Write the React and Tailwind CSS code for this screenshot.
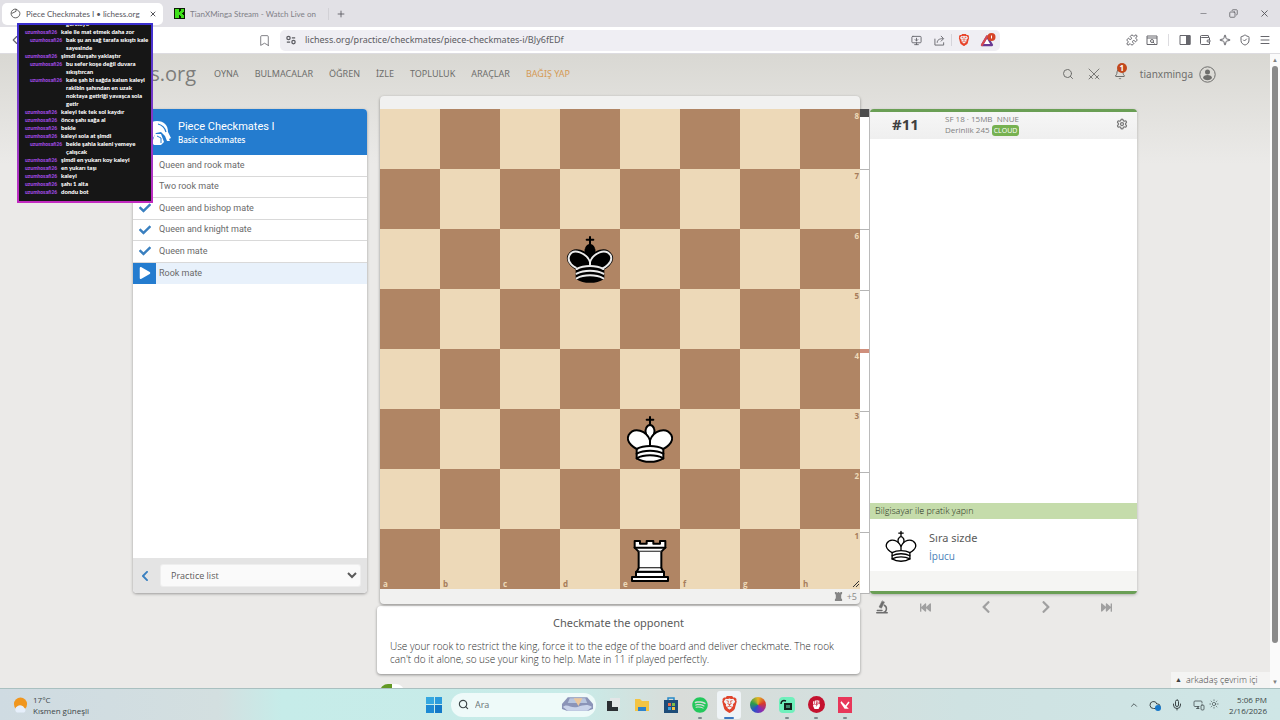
import React from "react";
import {
  Bookmark, Plus, X, Minus, Copy, Search, Bell, Settings, MonitorDown, Share, Puzzle,
  Wallet, Sparkle, ShieldCheck, Menu, ChevronLeft, ChevronUp, Mic, Cloud,
  CircleUserRound, MonitorSmartphone, Sun,
} from "lucide-react";
import {
  FaCheck, FaPlay, FaChevronLeft, FaChevronRight, FaFastBackward, FaFastForward,
  FaSpotify, FaFistRaised,
} from "react-icons/fa";
import { SiBrave } from "react-icons/si";

const user = "uzumhosafi26";
const chat = [
  { text: "kale ile mat etmek daha zor" },
  { text: "bak şu an sağ tarafa sıkıştı kale\nsayesinde", indent: true },
  { text: "şimdi durşahı yaklaştır" },
  { text: "bu sefer koşe değil duvara\nsıkıştırcan", indent: true },
  { text: "kale şah bi sağda kalsın kaleyi\nrakibin şahından en uzak\nnoktaya getiriği yavaşca sola\ngetir", indent: true },
  { text: "kaleyi tek tek sol kaydır" },
  { text: "önce şahı sağa al" },
  { text: "bekle" },
  { text: "kaleyi sola at şimdi" },
  { text: "bekle şahla kaleni yemeye\nçalışcak", indent: true },
  { text: "şimdi en yukarı koy kaleyi" },
  { text: "en yukarı taşı" },
  { text: "kaleyi" },
  { text: "şahı 1 alta" },
  { text: "dondu bot" },
];

const lessons = ["Queen and rook mate", "Two rook mate", "Queen and bishop mate", "Queen and knight mate", "Queen mate", "Rook mate"];
const files = ["a", "b", "c", "d", "e", "f", "g", "h"];
const ranks = [8, 7, 6, 5, 4, 3, 2, 1];
const pieces = { d6: "bk", e3: "wk", e1: "wr" };

function King({ black = false, className }) {
  const fill = black ? "#000" : "#fff";
  return (
    <svg viewBox="0 0 45 45" className={className} fill="none" stroke="#000" strokeWidth="1.5" strokeLinecap="round" strokeLinejoin="round">
      <path d="M22.5 11.63V6M20 8h5" strokeLinejoin="miter" />
      <path fill={fill} strokeLinecap="butt" d="M22.5 25s4.5-7.5 3-10.5c0 0-1-2.5-3-2.5s-3 2.5-3 2.5c-1.5 3 3 10.5 3 10.5" />
      <path fill={fill} d="M12.5 37c5.5 3.5 14.5 3.5 20 0v-7s9-4.5 6-10.5c-4-6.5-13.5-3.5-16 4V27v-3.5c-2.5-7.5-12-10.5-16-4-3 6 6 10.5 6 10.5v7" />
      {black && <path stroke="#ececec" d="M32 29.5s8.5-4 6-9.7C34.1 14 25 18 22.5 24.6v2.1-2.1C20 18 9.9 14 7 19.9c-2.5 5.6 4.8 9 4.8 9" />}
      <path stroke={black ? "#ececec" : "#000"} d="M12.5 30c5.5-3 14.5-3 20 0m-20 3.5c5.5-3 14.5-3 20 0m-20 3.5c5.5-3 14.5-3 20 0" />
    </svg>
  );
}

function Rook({ className }) {
  return (
    <svg viewBox="0 0 45 45" className={className} fill="#fff" stroke="#000" strokeWidth="1.5" strokeLinecap="round" strokeLinejoin="round">
      <path strokeLinecap="butt" d="M9 39h27v-3H9zm3-3v-4h21v4zm-1-22V9h4v2h5V9h5v2h5V9h4v5" />
      <path d="m34 14-3 3H14l-3-3" />
      <path strokeLinecap="butt" strokeLinejoin="miter" d="M31 17v12.5H14V17" />
      <path d="m31 29.5 1.5 2.5h-20l1.5-2.5" />
      <path fill="none" strokeLinejoin="miter" d="M11 14h23" />
    </svg>
  );
}

function IconButton({ label, children, className = "" }) {
  return (
    <button type="button" aria-label={label} className={`flex shrink-0 items-center justify-center ${className}`}>
      {children}
    </button>
  );
}

function TabStrip() {
  return (
    <div className="flex h-[27px] shrink-0 items-center bg-[#e2e1e6] font-['Lato',sans-serif] text-[8px] text-[#55555b]">
      <div className="ml-[2px] flex h-[22px] w-[161px] items-center rounded-[5px] bg-white pl-2 pr-[6px]">
        <svg viewBox="0 0 20 20" className="mr-[5px] size-[11px]" fill="none" stroke="#444" strokeWidth="1.5">
          <path d="M11 2a8 8 0 1 0 7 8c0-4-3-5-7-8Zm0 0 0 4-8 4" />
        </svg>
        <span className="flex-1 whitespace-nowrap">Piece Checkmates I • lichess.org</span>
        <IconButton label="Close tab"><X size={8} strokeWidth={3} /></IconButton>
      </div>
      <div className="flex w-[166px] items-center border-r border-[#d2d1d6] pl-[11px]">
        <svg viewBox="0 0 11 11" className="mr-[5px] size-[11px] shrink-0">
          <path fill="#0b1c05" d="M0 0h11v11H0z" />
          <path fill="#3fe01a" d="M1 1h4v3h1V3h1V1h3v3H9v1H8v1h1v1h1v3H7V8H6V7H5v3H1z" />
        </svg>
        <span className="whitespace-nowrap text-[#808086]">TianXMinga Stream - Watch Live on</span>
      </div>
      <IconButton label="New tab" className="ml-[7px]"><Plus size={10} /></IconButton>
      <div className="ml-auto flex items-center gap-[21px] pr-[10px]">
        <IconButton label="Minimize"><Minus size={9} strokeWidth={1.5} /></IconButton>
        <IconButton label="Restore"><Copy size={9} className="-scale-x-100" /></IconButton>
        <IconButton label="Close window"><X size={11} /></IconButton>
      </div>
    </div>
  );
}

function Toolbar() {
  return (
    <div className="flex h-[27px] shrink-0 items-center border-b border-[#dddce0] bg-white text-[#66666c]">
      <IconButton label="Back" className="ml-2"><ChevronLeft size={14} /></IconButton>
      <IconButton label="Bookmark" className="ml-[236px]"><Bookmark size={13} strokeWidth={1.5} /></IconButton>
      <div className="ml-[9px] flex h-[21px] w-[720px] items-center rounded-[5px] bg-[#efeef3] pr-1 pl-[6px]">
        <svg viewBox="0 0 12 12" className="size-[10px]" fill="none" stroke="#5c5c62" strokeWidth="1.5">
          <circle cx="3" cy="3.5" r="2" /><path d="M7 3.5h4M1 8.5h4" /><circle cx="9" cy="8.5" r="2" />
        </svg>
        <input
          aria-label="Address"
          readOnly
          value="lichess.org/practice/checkmates/piece-checkmates-i/BJy6fEDf"
          className="ml-[9px] min-w-0 flex-1 bg-transparent font-['Noto_Sans',sans-serif] text-[9px] text-[#5c5c62] outline-none"
        />
        <div className="flex items-center gap-3">
          <IconButton label="Install app"><MonitorDown size={11} /></IconButton>
          <IconButton label="Share">
            <svg viewBox="0 0 24 24" className="size-[11px]" fill="none" stroke="currentColor" strokeWidth="2"><path d="M2 8v14h19v-6" /><path d="M7 17c0-6 4-9 13-9M15 2l6 6-6 6" /></svg>
          </IconButton>
        </div>
        <span className="mx-[6px] h-3 w-px bg-[#d5d4da]" />
        <div className="flex items-center gap-[10px]">
          <IconButton label="Shields"><SiBrave size={12} color="#e8442a" /></IconButton>
          <button type="button" aria-label="Rewards">
            <svg viewBox="0 0 32 28" className="h-[14px] w-4">
              <path d="M14 7 4 24h20z" fill="#fff" stroke="#693a93" strokeWidth="4.5" strokeLinejoin="round" />
              <path d="M14 7 4 24" stroke="#d94a50" strokeWidth="4.5" strokeLinecap="round" />
              <circle cx="23" cy="8" r="8" fill="#d64528" />
              <path d="M23 5v6" stroke="#fff" strokeWidth="2" />
            </svg>
          </button>
        </div>
      </div>
      <div className="ml-auto flex items-center gap-2 pr-[9px]">
        <IconButton label="Extensions"><Puzzle size={12} /></IconButton>
        <IconButton label="Search tabs">
          <svg viewBox="0 0 24 24" className="size-3" fill="none" stroke="currentColor" strokeWidth="2"><path d="M2 4h20v17H2zM2 8h20" /><circle cx="12" cy="14" r="3" /><path d="m14 16 3 3" /></svg>
        </IconButton>
        <span className="mx-[2px] h-3 w-px bg-[#dddce0]" />
        <IconButton label="Sidebar">
          <svg viewBox="0 0 24 24" className="size-3" fill="none" stroke="currentColor" strokeWidth="2"><path d="M2 3h20v18H2z" /><path d="M15 3h7v18h-7z" fill="currentColor" /></svg>
        </IconButton>
        <IconButton label="Wallet"><Wallet size={12} /></IconButton>
        <IconButton label="Assistant"><Sparkle size={12} /></IconButton>
        <IconButton label="VPN"><ShieldCheck size={12} /></IconButton>
        <IconButton label="Menu"><Menu size={12} /></IconButton>
      </div>
    </div>
  );
}

function SiteHeader() {
  const links = ["OYNA", "BULMACALAR", "ÖĞREN", "İZLE", "TOPLULUK", "ARAÇLAR"];
  return (
    <header className="flex h-10 items-center pr-[54px] pl-[77px] text-[#6e6e6c]">
      <a href="#home" className="w-[119px] text-right text-[20px] leading-6 text-[#7d7d7b]">lichess.org</a>
      <nav className="ml-[18px] flex gap-4 font-['Noto_Sans',sans-serif] text-[9px]">
        {links.map((l) => <a key={l} href={`#${l}`}>{l}</a>)}
        <a href="#donate" className="text-[#d59a55]">BAĞIŞ YAP</a>
      </nav>
      <div className="ml-auto flex items-center gap-[14px]">
        <IconButton label="Search"><Search size={12} /></IconButton>
        <IconButton label="Challenges">
          <svg viewBox="0 0 24 24" className="size-3" fill="none" stroke="currentColor" strokeWidth="1.8" strokeLinecap="round">
            <path d="M2 2 20 20M22 2 4 20M15 21l6-6M9 21l-6-6M20 20l2 2M4 20l-2 2" />
          </svg>
        </IconButton>
        <button type="button" aria-label="Notifications" className="relative">
          <Bell size={12} />
          <span className="absolute -top-[5px] left-[3px] flex size-[10px] items-center justify-center rounded-full bg-[#c2481c] text-[8px] font-bold text-white">1</span>
        </button>
        <a href="#profile" className="flex items-center gap-[6px] font-['Noto_Sans',sans-serif] text-[10px]">
          tianxminga
          <svg viewBox="0 0 17 17" className="size-[17px]">
            <circle cx="8.5" cy="8.5" r="7.7" fill="none" stroke="currentColor" />
            <circle cx="8.5" cy="6" r="2.5" fill="currentColor" />
            <path d="M4 12c0-4 9-4 9 0-2 3-7 3-9 0z" fill="currentColor" />
          </svg>
        </a>
      </div>
    </header>
  );
}

function LessonPanel() {
  return (
    <aside className="mt-[13px] flex h-[484px] w-[234px] shrink-0 flex-col overflow-hidden rounded-[4px] bg-white shadow-[0_1px_3px_rgba(0,0,0,0.35)]">
      <div className="flex h-[46px] items-center bg-[#247ccf] pl-[10px] text-white">
        <svg viewBox="0 0 28 28" className="size-7">
          <path fill="#fff" d="M3 18C2 9 7 3 14 3s11 4 11 11l3 6-2 1 1 2h-3l-2-5-4-4-5 1-3 5v8H6z" />
          <path fill="none" stroke="#247ccf" strokeWidth="1.2" d="M15 6c4 1 7 4 8 8" />
          <path fill="#fff" d="M12 16h6l3 8-3 3h-7l-2-2z" />
          <path fill="none" stroke="#247ccf" strokeWidth="1" d="M14 18l4 2v5" />
        </svg>
        <div className="ml-[7px]">
          <h1 className="font-[family-name:Roboto,sans-serif] text-[11px] leading-[15px]">Piece Checkmates I</h1>
          <p className="font-['Noto_Sans',sans-serif] text-[8px] leading-3 font-medium">Basic checkmates</p>
        </div>
      </div>
      <nav className="grid h-[129px] grid-rows-6 font-[family-name:Roboto,sans-serif] text-[9px] text-[#6a6a6a]">
        {lessons.map((name, i) => {
          const active = i === lessons.length - 1;
          return (
            <a key={name} href={`#lesson-${i}`} className={active ? "flex items-center bg-[#e8f1fb]" : "flex items-center border-b border-[#d9d9d9]"}>
              <span className={active ? "flex h-full w-[23px] items-center justify-center bg-[#247ccf] text-white" : "flex h-full w-[23px] items-center justify-center text-[#3a80c0]"}>
                {active ? <FaPlay size={12} /> : <FaCheck size={12} />}
              </span>
              <span className="ml-[3px]">{name}</span>
            </a>
          );
        })}
      </nav>
      <div className="mt-auto flex h-[35px] items-center bg-[#e4e4e4] pr-[6px]">
        <IconButton label="Previous" className="mr-1 w-[23px] text-[#3a80c0]"><FaChevronLeft size={12} /></IconButton>
        <select aria-label="Practice list" className="h-[23px] flex-1 rounded-[3px] border border-[#eee] bg-[#fafafa] pl-[6px] text-[9px] text-[#5a5a5a]">
          <option>Practice list</option>
        </select>
      </div>
    </aside>
  );
}

function Board() {
  return (
    <div className="grid grid-cols-8">
      {ranks.map((rank, r) =>
        files.map((file, f) => {
          const dark = (r + f) % 2 === 1;
          const piece = pieces[file + rank];
          return (
            <div key={file + rank} className={dark ? "relative aspect-square bg-[#b08564] text-[#edd9b8]" : "relative aspect-square bg-[#edd9b8] text-[#a67c5b]"}>
              {piece === "bk" && <King black className="size-full" />}
              {piece === "wk" && <King className="size-full" />}
              {piece === "wr" && <Rook className="size-full" />}
              {file === "h" && <span className="absolute top-[1px] right-[1px] text-[8px] leading-3 font-bold">{rank}</span>}
              {rank === 1 && <span className="absolute bottom-0 left-[3px] text-[8px] leading-[11px] font-bold">{file}</span>}
            </div>
          );
        })
      )}
    </div>
  );
}

function BoardColumn() {
  return (
    <div className="w-[480px] shrink-0">
      <section aria-label="Board" className="relative rounded-[4px] bg-[#f1f1f0] pt-[13px] shadow-[0_1px_3px_rgba(0,0,0,0.4)]">
        <Board />
        <svg viewBox="0 0 8 8" className="absolute right-0 bottom-4 size-2" stroke="#333" strokeWidth="1"><path d="M1 7 7 1M4 7l3-3" /></svg>
        <div className="flex h-[15px] items-center justify-end gap-1 pr-[3px] text-[9px] text-[#8a8a8a]">
          <svg viewBox="0 0 10 10" className="size-[9px]" fill="#858585"><path d="M1 0h2v1h1V0h2v1h1V0h2v2L8 3v4l1 1v2H1V8l1-1V3L1 2z" /></svg>
          +5
        </div>
      </section>
      <section className="mt-[2px] -ml-[3px] h-[68px] rounded-[4px] bg-white px-[13px] pt-[9px] text-[#5a5a5a] shadow-[0_1px_3px_rgba(0,0,0,0.4)]">
        <h2 className="text-center font-['Noto_Sans',sans-serif] text-[11px] leading-4">Checkmate the opponent</h2>
        <p className="mt-[9px] text-[10px] leading-[13px] font-light text-[#2c2c2c]">
          Use your rook to restrict the king, force it to the edge of the board and deliver checkmate. The rook can't do it alone, so use your king to help. Mate in 11 if played perfectly.
        </p>
      </section>
      <div className="mt-[10px] h-4 w-6 rounded-full bg-linear-to-r from-[#629924] from-50% to-white to-50%" />
    </div>
  );
}

function Gauge() {
  return (
    <div className="relative mt-[13px] grid h-[485px] w-[10px] shrink-0 grid-rows-8 border-r border-[#bbb] bg-white">
      {ranks.map((r) => <span key={r} className="border-b border-[#b5b5b5]" />)}
      <span className="absolute inset-x-0 top-0 h-2 bg-[#4d4d4d]" />
      <span className="absolute inset-x-0 top-[240px] h-1 bg-[#cf8f7c]" />
    </div>
  );
}

function ToolsColumn() {
  return (
    <div className="mt-[13px] min-w-0 flex-1">
      <section aria-label="Analysis" className="flex h-[485px] flex-col rounded-[4px] border-y-[3px] border-[#6a9f55] bg-white shadow-[0_1px_3px_rgba(0,0,0,0.25)]">
        <div className="flex h-[27px] items-center bg-linear-to-b from-[#f6f6f6] to-[#efefef] pb-[3px]">
          <strong className="ml-[22px] w-[53px] text-[15px] text-[#404040]">#11</strong>
          <div className="text-[8px] leading-[11px] text-[#808080]">
            <div>SF 18 · 15MB&nbsp; NNUE</div>
            <div>Derinlik 245 <span className="rounded-[3px] bg-[#76b150] px-[2px] py-px text-[7px] text-white">CLOUD</span></div>
          </div>
          <IconButton label="Engine settings" className="mr-[9px] ml-auto text-[#777]"><Settings size={12} strokeWidth={2.5} /></IconButton>
        </div>
        <div className="mt-auto h-4 bg-[#c5dcab] pl-[5px] text-[9px] leading-4 font-light text-[#1e2a18]">Bilgisayar ile pratik yapın</div>
        <div className="flex h-[52px] items-center pt-[2px] pl-[11px]">
          <King className="size-10" />
          <div className="ml-2 pt-[2px]">
            <div className="font-['Noto_Sans',sans-serif] text-[11px] leading-[18px] text-[#5a5a5a]">Sıra sizde</div>
            <a href="#hint" className="block text-[10px] leading-[18px] text-[#4a80b8]">İpucu</a>
          </div>
        </div>
        <div className="h-5 bg-[#f5f5f3]" />
      </section>
      <div className="flex h-[26px] items-center text-[#a0a0a0]">
        <IconButton label="Analysis board" className="ml-[5px] w-[14px] text-[#6e6e6e]">
          <svg viewBox="0 0 24 24" className="size-[14px]" fill="none" stroke="currentColor" strokeWidth="2.5" strokeLinecap="round">
            <path d="M3 22h18M4 18h8M14 22a7 7 0 0 0 2-13" />
            <path d="m12 2-5 10 4 2 5-10z" fill="currentColor" strokeWidth="1" />
          </svg>
        </IconButton>
        <div className="ml-[6px] grid flex-1 grid-cols-4">
          <IconButton label="First move"><FaFastBackward size={11} /></IconButton>
          <IconButton label="Previous move"><FaChevronLeft size={14} /></IconButton>
          <IconButton label="Next move"><FaChevronRight size={14} /></IconButton>
          <IconButton label="Last move"><FaFastForward size={11} /></IconButton>
        </div>
      </div>
    </div>
  );
}

function ChatOverlay() {
  return (
    <section aria-label="Chat" className="absolute top-[23px] left-[17px] h-[180px] w-[136px] bg-linear-to-b from-[#3a2fd0] to-[#c22ac0] p-[2px]">
      <div className="flex h-full flex-col justify-end overflow-hidden bg-[#161616] px-[6px] pb-[5px] font-['Lato',sans-serif] text-[6px] leading-[8px] font-black text-white">
        <p className="pl-[41px]">gerekiyo</p>
        {chat.map((m) => (
          <p key={m.text} className={m.indent ? "flex gap-[2px] pl-[5px]" : "flex gap-[2px]"}>
            <span className="w-[34px] shrink-0 font-[family-name:Roboto,sans-serif] text-[5px] leading-[8px] font-bold text-[#a04ae0]">{user}</span>
            <span className="whitespace-pre">{m.text}</span>
          </p>
        ))}
      </div>
    </section>
  );
}

function TaskApp({ label, running = false, active = false, children }) {
  return (
    <button type="button" aria-label={label} className={active ? "relative flex h-7 w-6 items-center justify-center rounded-[3px] bg-[#eff4f7]" : "relative flex h-7 w-6 items-center justify-center"}>
      {children}
      {running && <span className="absolute bottom-0 left-[10px] h-[2px] w-1 rounded-full bg-[#7d8a8e]" />}
      {active && <span className="absolute bottom-0 left-[7px] h-[2px] w-[10px] rounded-full bg-[#3b78c0]" />}
    </button>
  );
}

function Taskbar() {
  return (
    <footer className="flex h-8 shrink-0 items-center border-t border-[#a9c0c0] bg-[linear-gradient(to_right,#cfdbe2,#d3dfe0_17%,#c6ece9_22%,#c8ebe8_45%,#d9dcd9_53%,#cfe2e2_75%,#cfe6e6)] text-[8px] leading-[11px] text-[#3c4648]">
      <div className="flex flex-1 items-center gap-[5px] pl-[13px]">
        <svg viewBox="0 0 16 18" className="h-[18px] w-[15px]">
          <circle cx="8" cy="8" r="7" fill="#f0961e" />
          <path d="M4 17a4 4 0 0 1 1-7 5 5 0 0 1 7 2 3 3 0 0 1 0 5z" fill="#e6effb" />
        </svg>
        <div><div>17°C</div><div>Kısmen güneşli</div></div>
      </div>
      <div className="flex items-center gap-[5px] pl-[3px]">
        <button type="button" aria-label="Start" className="grid size-4 grid-cols-2 gap-px">
          <span className="bg-[#35a8e0]" /><span className="bg-[#2b9bdc]" /><span className="bg-[#1d8ad4]" /><span className="bg-[#1279c8]" />
        </button>
        <label className="ml-1 flex h-6 w-[145px] items-center gap-[6px] rounded-full bg-[#eefaf9] pr-[2px] pl-[7px]">
          <Search size={11} strokeWidth={2.5} />
          <input aria-label="Search" placeholder="Ara" className="min-w-0 flex-1 bg-transparent text-[9px] outline-none placeholder:text-[#6a7476]" />
          <svg viewBox="0 0 34 18" className="h-[18px] w-[33px]">
            <path d="M7 1h20l6 7v5l-5 2H6l-5-2V8z" fill="#8b94b8" />
            <path d="M9 2h16l2 5H7z" fill="#b9c6df" />
            <path d="M13 2h9l-4 8z" fill="#ecc79c" />
            <path d="M2 11c5-4 8 2 15 0s10-3 15 0l-5 4H7z" fill="#c9d3ea" />
          </svg>
        </label>
        <TaskApp label="Task view">
          <svg viewBox="0 0 16 16" className="size-4"><path d="M5 1h10v10H5z" fill="#e3e6e7" /><path d="M2 4h5v6h6v4H2z" fill="#2c2f33" /></svg>
        </TaskApp>
        <TaskApp label="Files">
          <svg viewBox="0 0 16 16" className="size-4"><path d="M1 2h5l2 2h7v10H1z" fill="#f3c443" /><path d="M4 10h8v4H4z" fill="#2f83cc" /></svg>
        </TaskApp>
        <TaskApp label="Store">
          <svg viewBox="0 0 16 18" className="h-[18px] w-4"><path d="M5 5V2h6v3" fill="none" stroke="#2889c8" strokeWidth="1.5" /><path d="M1 4h14v13H1z" fill="#1e4c78" /><path d="M5 7h3v3H5z" fill="#ee6a4a" /><path d="M9 7h3v3H9z" fill="#7cbc4a" /><path d="M5 11h3v3H5z" fill="#38a5e4" /><path d="M9 11h3v3H9z" fill="#f4c342" /></svg>
        </TaskApp>
        <TaskApp label="Spotify" running><FaSpotify size={16} color="#24c85c" /></TaskApp>
        <TaskApp label="Brave" active><SiBrave size={17} color="#e0442c" /></TaskApp>
        <TaskApp label="Color tool">
          <span className="size-4 rounded-full bg-[conic-gradient(#e6b422,#d8392b,#8c2bb0,#2b50c8,#2a9d4a,#e6b422)]" />
        </TaskApp>
        <TaskApp label="Streaming" running>
          <svg viewBox="0 0 16 16" className="size-4"><rect width="16" height="16" rx="4" fill="#6ff0bc" /><path d="M5 6h8v7H5z" fill="#12211c" /><path d="M8 8v3m2-3v3" stroke="#6ff0bc" /><path d="M2 7c0-3 2-4 5-3" fill="none" stroke="#12211c" strokeWidth="1.5" /></svg>
        </TaskApp>
        <TaskApp label="Fist" running>
          <span className="flex size-[17px] items-center justify-center rounded-full bg-[#c4122f] text-white"><FaFistRaised size={9} /></span>
        </TaskApp>
        <TaskApp label="Valorant" running>
          <svg viewBox="0 0 14 16" className="h-4 w-[14px]"><path d="M0 0h14v16H0z" fill="#e8375a" /><path d="m3 5 4 6h2L3 5m8 0L8 9" stroke="#fff" strokeWidth="1.5" fill="none" /></svg>
        </TaskApp>
      </div>
      <div className="flex flex-1 items-center justify-end gap-[10px] pr-[13px]">
        <ChevronUp size={10} />
        <span className="relative"><Cloud size={12} /><span className="absolute right-0 bottom-0 size-[6px] rounded-full bg-[#1777c8]" /></span>
        <Mic size={12} />
        <span className="flex gap-1"><MonitorSmartphone size={12} strokeWidth={1.5} /><Sun size={10} strokeWidth={1.5} /></span>
        <div className="text-right"><div>5:06 PM</div><div>2/16/2026</div></div>
      </div>
    </footer>
  );
}

export default function App() {
  return (
    <div className="relative flex h-screen flex-col overflow-hidden font-['Open_Sans',sans-serif]">
      <TabStrip />
      <Toolbar />
      <div className="flex min-h-0 flex-1">
        <div className="relative min-w-0 flex-1 overflow-hidden bg-[#ebeae8] bg-[linear-gradient(to_bottom,#d9d8d3,#ebeae8_110px)]">
          <SiteHeader />
          <main className="mx-auto mt-[2px] flex max-w-[1004px] items-start">
            <LessonPanel />
            <div className="w-[13px] shrink-0" />
            <BoardColumn />
            <Gauge />
            <ToolsColumn />
          </main>
          <button type="button" className="absolute right-0 bottom-0 flex h-4 w-[99px] items-center gap-1 bg-[#f4f4f3] pl-[4px] text-[9px] font-light text-[#404040]">
            <span className="text-[7px]">▲</span>arkadaş çevrim içi
          </button>
        </div>
        <div className="flex w-[10px] shrink-0 flex-col items-center bg-[#fafafa] text-[6px] leading-[12px] text-[#808080]">
          <span>▲</span>
          <span className="h-[577px] w-[6px] rounded-full bg-[#8a8a8a]" />
          <span className="mt-auto">▼</span>
        </div>
      </div>
      <Taskbar />
      <ChatOverlay />
    </div>
  );
}
